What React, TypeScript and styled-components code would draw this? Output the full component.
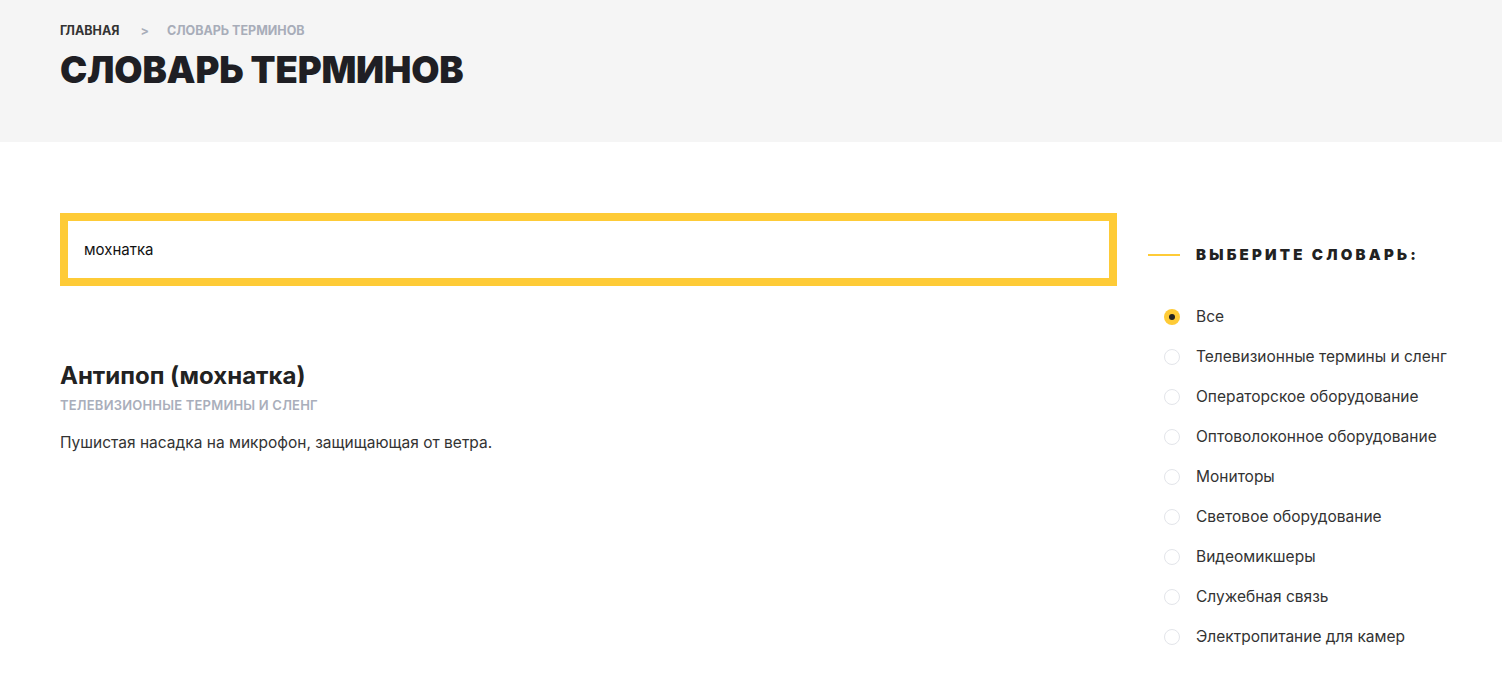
import React, { useState } from "react";
import styled, { createGlobalStyle } from "styled-components";

const Global = createGlobalStyle`
  html, body { margin: 0; padding: 0; background: #fff; }
  body { font-family: Inter, "Noto Sans", sans-serif; color: #222; }
  * { box-sizing: border-box; }
`;

const Header = styled.header`
  background: #f5f5f5;
  height: 142px;
  padding: 23px 60px 0;
`;

const Crumbs = styled.nav`
  display: flex;
  align-items: center;
  gap: 18px;
  font-size: 12.5px;
  font-weight: 700;
  text-transform: uppercase;
  line-height: 16px;
`;

const Crumb = styled.span<{ $active?: boolean }>`
  color: ${(p) => (p.$active ? "#a8adb9" : "#333")};
  &:first-child {
    margin-right: 3px;
  }
`;

const Title = styled.h1`
  margin: 8px 0 0;
  font-size: 36.5px;
  font-weight: 900;
  letter-spacing: -0.2px;
  color: #1f1f24;
  line-height: 46px;
  text-transform: uppercase;
`;

const Body = styled.div`
  display: grid;
  grid-template-columns: 1057px 1fr;
  column-gap: 31px;
  padding: 71px 0 0 60px;
`;

const Main = styled.main``;

const SearchBox = styled.input`
  display: block;
  width: 100%;
  height: 73px;
  border: 8px solid #fecb37;
  padding: 0 16px;
  font-family: Inter, "Noto Sans", sans-serif;
  font-size: 15px;
  color: #111;
  outline: none;
  background: #fff;
`;

const Result = styled.article`
  margin-top: 75px;
`;

const ResultTitle = styled.h2`
  margin: 0;
  font-size: 24px;
  font-weight: 700;
  color: #222;
  line-height: 30px;
`;

const ResultCat = styled.div`
  margin-top: 6px;
  font-size: 13px;
  font-weight: 600;
  letter-spacing: 0.2px;
  text-transform: uppercase;
  color: #a9aebb;
  line-height: 16px;
`;

const ResultText = styled.p`
  margin: 20px 0 0;
  font-size: 15.5px;
  color: #333;
  line-height: 20px;
`;

const Aside = styled.aside`
  padding-top: 32px;
`;

const AsideHead = styled.div`
  display: flex;
  align-items: center;
  gap: 16px;
  font-size: 15px;
  font-weight: 900;
  letter-spacing: 3.2px;
  text-transform: uppercase;
  color: #222;
  line-height: 20px;
`;

const Dash = styled.span`
  width: 32px;
  height: 2px;
  background: #fecb37;
`;

const List = styled.ul`
  list-style: none;
  margin: 42px 0 0;
  padding: 0 0 0 16px;
  display: flex;
  flex-direction: column;
  gap: 20px;
`;

const Item = styled.li`
  display: flex;
  align-items: center;
  gap: 16px;
  font-size: 15.5px;
  color: #333;
  line-height: 20px;
  cursor: pointer;
  white-space: nowrap;
`;

const Radio = styled.span<{ $on?: boolean }>`
  width: 16px;
  height: 16px;
  border-radius: 50%;
  flex: none;
  display: flex;
  align-items: center;
  justify-content: center;
  background: ${(p) => (p.$on ? "#fecb37" : "#fff")};
  border: ${(p) => (p.$on ? "none" : "1px solid #e3e5ea")};
  &::after {
    content: "";
    width: 6px;
    height: 6px;
    border-radius: 50%;
    background: #222;
    display: ${(p) => (p.$on ? "block" : "none")};
  }
`;

const items = [
  "Все",
  "Телевизионные термины и сленг",
  "Операторское оборудование",
  "Оптоволоконное оборудование",
  "Мониторы",
  "Световое оборудование",
  "Видеомикшеры",
  "Служебная связь",
  "Электропитание для камер",
];

export default function App() {
  const [sel, setSel] = useState(0);
  const [q, setQ] = useState("мохнатка");
  return (
    <>
      <Global />
      <Header>
        <Crumbs>
          <Crumb>Главная</Crumb>
          <Crumb $active>&gt;</Crumb>
          <Crumb $active>Словарь терминов</Crumb>
        </Crumbs>
        <Title>Словарь терминов</Title>
      </Header>
      <Body>
        <Main>
          <SearchBox value={q} onChange={(e) => setQ(e.target.value)} />
          <Result>
            <ResultTitle>Антипоп (мохнатка)</ResultTitle>
            <ResultCat>Телевизионные термины и сленг</ResultCat>
            <ResultText>Пушистая насадка на микрофон, защищающая от ветра.</ResultText>
          </Result>
        </Main>
        <Aside>
          <AsideHead>
            <Dash />
            Выберите словарь:
          </AsideHead>
          <List>
            {items.map((t, i) => (
              <Item key={t} onClick={() => setSel(i)}>
                <Radio $on={sel === i} />
                {t}
              </Item>
            ))}
          </List>
        </Aside>
      </Body>
    </>
  );
}
